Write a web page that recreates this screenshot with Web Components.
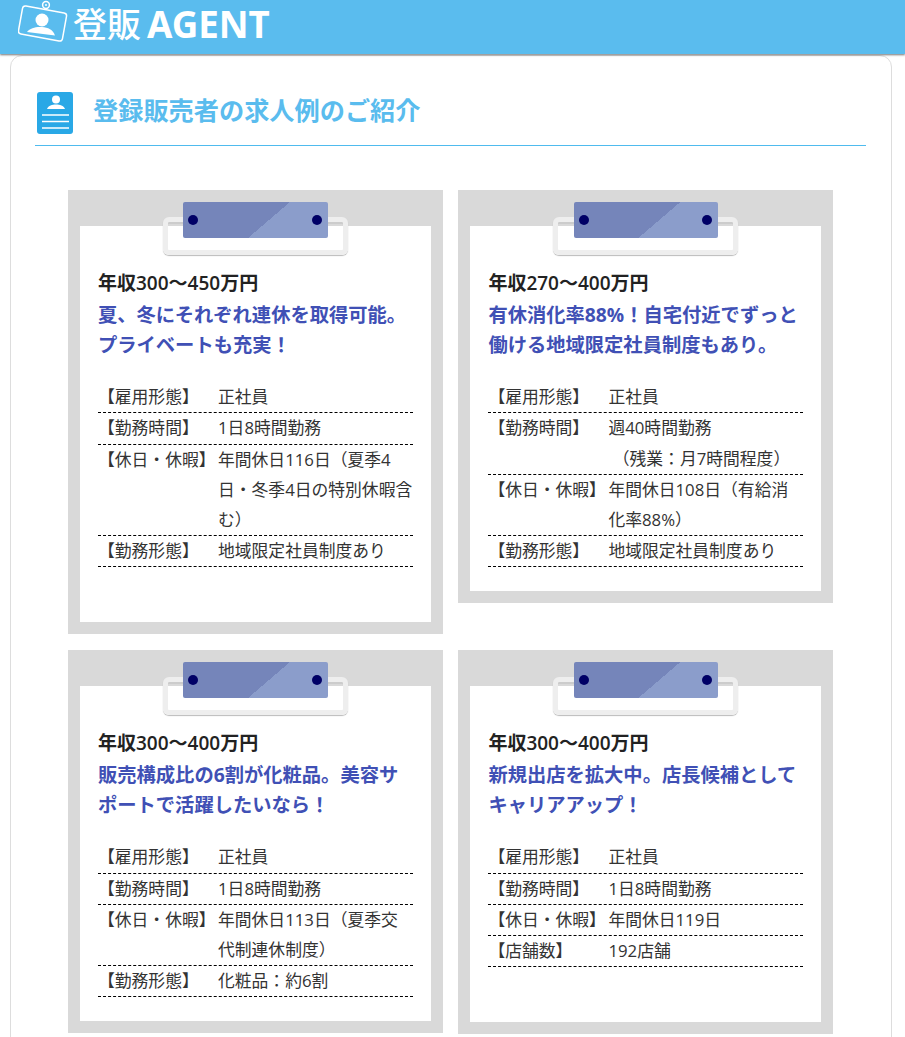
<!DOCTYPE html>
<html lang="ja">
<head>
<meta charset="utf-8">
<title>登録販売者の求人例</title>
<style>
  html, body { margin: 0; padding: 0; background: #fff; }
  body { font-family: "Open Sans", "Noto Sans CJK JP", sans-serif; color: #333; overflow: hidden; height: 1037px; }
</style>
</head>
<body>
<site-header></site-header>
<content-panel>
  <section-heading>登録販売者の求人例のご紹介</section-heading>
  <job-grid>
    <job-card salary="年収300〜450万円" trailing>
      <span slot="title">夏、冬にそれぞれ連休を取得可能。<br>プライベートも充実！</span>
      <job-row label="【雇用形態】">正社員</job-row>
      <job-row label="【勤務時間】">1日8時間勤務</job-row>
      <job-row label="【休日・休暇】">年間休日116日（夏季4<br>日・冬季4日の特別休暇含<br>む）</job-row>
      <job-row label="【勤務形態】">地域限定社員制度あり</job-row>
    </job-card>
    <job-card salary="年収270〜400万円">
      <span slot="title">有休消化率88%！自宅付近でずっと<br>働ける地域限定社員制度もあり。</span>
      <job-row label="【雇用形態】">正社員</job-row>
      <job-row label="【勤務時間】">週40時間勤務<br>&nbsp;（残業：月7時間程度）</job-row>
      <job-row label="【休日・休暇】">年間休日108日（有給消<br>化率88%）</job-row>
      <job-row label="【勤務形態】">地域限定社員制度あり</job-row>
    </job-card>
    <job-card salary="年収300〜400万円">
      <span slot="title">販売構成比の6割が化粧品。美容サ<br>ポートで活躍したいなら！</span>
      <job-row label="【雇用形態】">正社員</job-row>
      <job-row label="【勤務時間】">1日8時間勤務</job-row>
      <job-row label="【休日・休暇】">年間休日113日（夏季交<br>代制連休制度）</job-row>
      <job-row label="【勤務形態】">化粧品：約6割</job-row>
    </job-card>
    <job-card salary="年収300〜400万円" trailing>
      <span slot="title">新規出店を拡大中。店長候補として<br>キャリアアップ！</span>
      <job-row label="【雇用形態】">正社員</job-row>
      <job-row label="【勤務時間】">1日8時間勤務</job-row>
      <job-row label="【休日・休暇】">年間休日119日</job-row>
      <job-row label="【店舗数】">192店舗</job-row>
    </job-card>
  </job-grid>
</content-panel>

<script>
class SiteHeader extends HTMLElement {
  constructor() {
    super();
    this.attachShadow({mode: "open"});
  }
  connectedCallback() {
    this.shadowRoot.innerHTML = `
    <style>
      :host {
        display: flex;
        align-items: center;
        height: 54px;
        padding-left: 18px;
        background: #5abcee;
        box-shadow: 0 1px 2px rgba(0, 0, 0, 0.55);
        position: relative;
        color: #fff;
        font-family: "Open Sans", "Noto Sans CJK JP", sans-serif;
      }
      svg { display: block; flex: none; align-self: flex-start; }
      .kanji { font-size: 34px; line-height: 54px; margin: -6px 0 0 1px; font-weight: 500; }
      .agent { font-size: 36.7px; line-height: 54px; margin: -6px 0 0 6px; font-weight: 700; font-family: "Noto Sans", sans-serif; }
    </style>
    <svg width="54" height="46" viewBox="0 0 54 46" fill="none">
      <rect x="2.150" y="9.300" width="44.700" height="28.400" rx="3" transform="rotate(10.300 24.500 23.500)" stroke="#fff" stroke-width="1.500"/>
      <circle cx="28" cy="5" r="3.400" stroke="#fff" stroke-width="1.500" fill="#5abcee"/>
      <circle cx="28" cy="5" r="1" fill="#fff"/>
      <circle cx="24" cy="20" r="6.500" fill="#fff"/>
      <path d="M9 32c3-4 9-5.500 15-5c6 .5 11 2.500 13 8.500z" fill="#fff"/>
    </svg>
    <span class="kanji">登販</span><span class="agent">AGENT</span>`;
  }
}

class ContentPanel extends HTMLElement {
  constructor() {
    super();
    this.attachShadow({mode: "open"});
  }
  connectedCallback() {
    this.shadowRoot.innerHTML = `
    <style>
      :host {
        display: block;
        margin: 1px 13px 0 10px;
        padding: 36px 25px 40px 24px;
        min-height: 1000px;
        border: 1px solid #ddd;
        border-radius: 12px 12px 0 0;
        background: #fff;
      }
    </style>
    <slot></slot>`;
  }
}

class SectionHeading extends HTMLElement {
  constructor() {
    super();
    this.attachShadow({mode: "open"});
  }
  connectedCallback() {
    this.shadowRoot.innerHTML = `
    <style>
      :host {
        display: flex;
        align-items: center;
        height: 53px;
        padding-left: 2px;
        border-bottom: 1px solid #4fbbee;
        font-family: "Open Sans", "Noto Sans CJK JP", sans-serif;
      }
      svg { display: block; flex: none; margin-top: -11px; }
      h2 {
        margin: -17px 0 0 20px;
        font-size: 25.2px;
        line-height: 36px;
        font-weight: 700;
        color: #5abcee;
      }
    </style>
    <svg width="36" height="42" viewBox="0 0 36 42">
      <rect width="36" height="42" rx="3" fill="#29a8e6"/>
      <circle cx="19" cy="7.500" r="4" fill="#fff"/>
      <path d="M10 17c1.500-3.500 5-4.500 9-4.500s7.500 1 9 4.500z" fill="#fff"/>
      <path d="M5 23h27M5 29.500h27M5 36h27" stroke="#fff" stroke-width="1.600"/>
    </svg>
    <h2><slot></slot></h2>`;
  }
}

class JobGrid extends HTMLElement {
  constructor() {
    super();
    this.attachShadow({mode: "open"});
  }
  connectedCallback() {
    this.shadowRoot.innerHTML = `
    <style>
      :host {
        display: grid;
        grid-template-columns: 375px 375px;
        column-gap: 15.4px;
        row-gap: 16px;
        align-items: start;
        margin-top: 44px;
        padding-left: 33px;
      }
    </style>
    <slot></slot>`;
  }
}

class JobCard extends HTMLElement {
  constructor() {
    super();
    this.attachShadow({mode: "open"});
  }
  connectedCallback() {
    const salary = this.getAttribute("salary");
    this.shadowRoot.innerHTML = `
    <style>
      :host {
        display: block;
        position: relative;
        padding: 36px 12px 12px;
        background: #d9d9d9;
        font-family: "Open Sans", "Noto Sans CJK JP", sans-serif;
      }
      .sheet {
        padding: 44px 18px 24px;
        background: #fff;
      }
      :host([trailing]) .sheet { padding-bottom: 55px; }
      .clip {
        position: absolute;
        left: 95px;
        top: 27px;
        width: 185px;
        height: 38px;
        box-sizing: border-box;
        border: 5px solid #eee;
        border-radius: 6px;
        box-shadow: 0 1px 1px #bbb, inset 0 2px 0 #ccc;
      }
      .plate {
        position: absolute;
        left: 115.3px;
        top: 12px;
        width: 144.7px;
        height: 36px;
        border-radius: 2px;
        background: linear-gradient(139.4deg, #7585ba 0 57.2%, #8b9dcb 57.2%);
      }
      .plate::before, .plate::after {
        content: "";
        position: absolute;
        top: 13px;
        width: 10px;
        height: 10px;
        border-radius: 50%;
        background: #000066;
      }
      .plate::before { left: 5px; }
      .plate::after { right: 6px; }
      .salary {
        font-size: 19px;
        line-height: 26px;
        font-weight: 600;
        color: #222;
      }
      .title {
        margin: 4px 0 23.1px;
        font-size: 19.3px;
        line-height: 29.5px;
        font-weight: 700;
        color: #4050b5;
        white-space: nowrap;
      }
    </style>
    <div class="clip"></div>
    <div class="plate"></div>
    <div class="sheet">
      <div class="salary">${salary}</div>
      <div class="title"><slot name="title"></slot></div>
      <slot></slot>
    </div>`;
  }
}

class JobRow extends HTMLElement {
  constructor() {
    super();
    this.attachShadow({mode: "open"});
  }
  connectedCallback() {
    this.shadowRoot.innerHTML = `
    <style>
      :host {
        display: grid;
        grid-template-columns: 120px 1fr;
        border-bottom: 1px dashed #000;
        font-size: 16.8px;
        line-height: 30.2px;
        color: #333;
        white-space: nowrap;
      }
    </style>
    <div class="label">${this.getAttribute("label")}</div>
    <div class="value"><slot></slot></div>`;
  }
}

customElements.define("site-header", SiteHeader);
customElements.define("content-panel", ContentPanel);
customElements.define("section-heading", SectionHeading);
customElements.define("job-grid", JobGrid);
customElements.define("job-card", JobCard);
customElements.define("job-row", JobRow);
</script>
</body>
</html>
